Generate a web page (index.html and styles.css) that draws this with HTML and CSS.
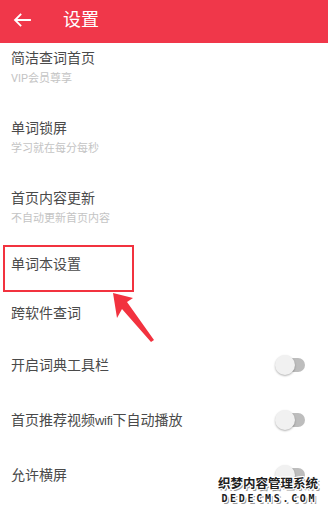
FILE: index.html
```html
<!DOCTYPE html>
<html lang="zh-CN">
<head>
<meta charset="utf-8">
<link rel="stylesheet" href="styles.css">
</head>
<body>
<div class="screen">
  <header class="topbar">
    <svg class="back" width="18" height="14" viewBox="0 0 18 14"><path d="M17 7H2.5M7.5 1.5L2 7l5.5 5.5" fill="none" stroke="#fff" stroke-width="1.8" stroke-linecap="square"/></svg>
    <span class="title">设置</span>
  </header>
  <main class="list">
    <div class="item sub first"><div class="t">简洁查词首页</div><div class="s">VIP会员尊享</div></div>
    <div class="item sub"><div class="t">单词锁屏</div><div class="s">学习就在每分每秒</div></div>
    <div class="item sub"><div class="t">首页内容更新</div><div class="s">不自动更新首页内容</div></div>
    <div class="item single"><div class="t">单词本设置</div></div>
    <div class="item single"><div class="t">跨软件查词</div></div>
    <div class="item tog"><div class="t">开启词典工具栏</div><span class="switch"><span class="knob"></span></span></div>
    <div class="item tog"><div class="t">首页推荐视频<span class="lat">wifi</span>下自动播放</div><span class="switch"><span class="knob"></span></span></div>
    <div class="item tog"><div class="t">允许横屏</div><span class="switch"><span class="knob"></span></span></div>
  </main>
  <div class="mark-box"></div>
  <svg class="mark-arrow" width="60" height="60" viewBox="0 0 60 60"><polygon points="3,3 23,8 17,12 44,50 41,52 12,19 7,28" fill="#f2323f"/></svg>
  <div class="watermark"><div class="wm1">织梦内容管理系统</div><div class="wm2">DEDECMS.COM</div></div>
</div>
</body>
</html>
```
FILE: styles.css
```css
* { box-sizing: border-box; }
html, body { margin: 0; padding: 0; }
body { background: #fff; font-family: Roboto, "Noto Sans CJK SC", sans-serif; }
.screen { position: relative; width: 328px; height: 511px; overflow: hidden; background: #fff; }
.topbar { height: 43px; background: #f0374a; display: flex; align-items: center; padding: 0 0 3px 13px; }
.back { display: block; }
.title { color: #fff; font-size: 18px; margin-left: 32px; line-height: 24px; }
.list { display: flex; flex-direction: column; }
.item { padding-left: 11px; padding-right: 23px; }
.t { font-size: 14px; line-height: 20px; color: #4a4a4a; }
.lat { font-family: "Liberation Sans", sans-serif; font-size: 13px; letter-spacing: -0.3px; }
.s { font-size: 11px; line-height: 16px; color: #c4c4c4; margin-top: 3px; }
.item.sub { height: 70px; padding-top: 16px; }
.item.sub.first { height: 59px; padding-top: 5px; }
.item.single { height: 49px; padding-top: 12px; }
.item.tog { height: 55px; padding-top: 15px; display: flex; justify-content: space-between; align-items: flex-start; }
.switch { position: relative; width: 30px; height: 20px; }
.switch::before { content: ""; position: absolute; left: 8px; top: 3px; width: 22px; height: 14px; border-radius: 7px; background: #bdbdbd; }
.knob { position: absolute; left: 0; top: 0; width: 20px; height: 20px; border-radius: 50%; background: #f1f1f1; box-shadow: 0 1px 2px rgba(0,0,0,0.3); }
.mark-box { position: absolute; left: 3px; top: 245px; width: 131px; height: 47px; border: 2px solid #f2323f; }
.mark-arrow { position: absolute; left: 110px; top: 290px; }
.watermark { position: absolute; left: 216px; top: 476px; width: 104px; color: #1e1e1e; display: flex; flex-direction: column; align-items: center; }
.wm1 { font-family: "Noto Sans CJK SC", sans-serif; font-size: 12.5px; line-height: 14px; font-weight: 700; white-space: nowrap; text-shadow: 1px 0 #fff, -1px 0 #fff, 0 1px #fff, 0 -1px #fff, 1px 1px #fff, -1px -1px #fff, 1px -1px #fff, -1px 1px #fff, 2px 2px #999; }
.wm2 { font-family: "DejaVu Sans Mono", monospace; font-size: 10px; line-height: 11px; margin-top: 3px; font-weight: 700; letter-spacing: 2.7px; margin-right: -2.7px; white-space: nowrap; text-shadow: 1px 0 #fff, -1px 0 #fff, 0 1px #fff, 0 -1px #fff, 1px 1px #fff, -1px -1px #fff, 1px -1px #fff, -1px 1px #fff, 2px 2px #999; }
```
